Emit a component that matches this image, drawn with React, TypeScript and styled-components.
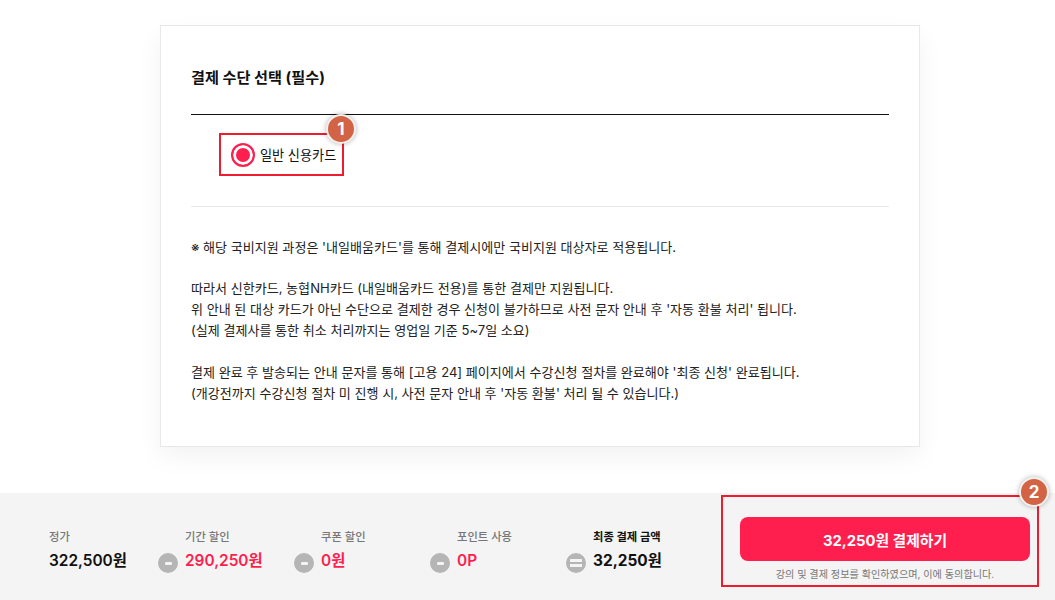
import React from 'react';
import styled, { createGlobalStyle } from 'styled-components';

const GlobalStyle = createGlobalStyle`
  html, body {
    margin: 0;
    padding: 0;
    background: #fff;
    font-family: Inter, "Noto Sans CJK KR", sans-serif;
    color: #111;
  }
  * { box-sizing: border-box; }
`;

const NOTICE = [
  ["※ 해당 국비지원 과정은 '내일배움카드'를 통해 결제시에만 국비지원 대상자로 적용됩니다."],
  [
    '따라서 신한카드, 농협NH카드 (내일배움카드 전용)를 통한 결제만 지원됩니다.',
    "위 안내 된 대상 카드가 아닌 수단으로 결제한 경우 신청이 불가하므로 사전 문자 안내 후 '자동 환불 처리' 됩니다.",
    '(실제 결제사를 통한 취소 처리까지는 영업일 기준 5~7일 소요)',
  ],
  [
    "결제 완료 후 발송되는 안내 문자를 통해 [고용 24] 페이지에서 수강신청 절차를 완료해야 '최종 신청' 완료됩니다.",
    "(개강전까지 수강신청 절차 미 진행 시, 사전 문자 안내 후 '자동 환불' 처리 될 수 있습니다.)",
  ],
];

const PRICES = [
  { label: '기간 할인', value: '290,250원' },
  { label: '쿠폰 할인', value: '0원' },
  { label: '포인트 사용', value: '0P' },
];

function App() {
  return (
    <Page>
      <GlobalStyle />
      <Card>
        <Title>결제 수단 선택 (필수)</Title>
        <MethodArea>
          <MethodBox>
            <Radio />
            <MethodLabel>일반 신용카드</MethodLabel>
            <Marker $top={-21} $right={-14}>1</Marker>
          </MethodBox>
        </MethodArea>
        <Notice>
          {NOTICE.map((group) => (
            <NoticeGroup key={group[0]}>
              {group.map((line) => (
                <NoticeLine key={line}>{line}</NoticeLine>
              ))}
            </NoticeGroup>
          ))}
        </Notice>
      </Card>
      <BottomBar>
        <PriceList>
          <PriceItem>
            <PriceLabel>정가</PriceLabel>
            <PriceValue>322,500원</PriceValue>
          </PriceItem>
          {PRICES.map((price) => (
            <PriceItem key={price.label}>
              <Operator>
                <Minus />
              </Operator>
              <PriceLabel>{price.label}</PriceLabel>
              <PriceValue $red>{price.value}</PriceValue>
            </PriceItem>
          ))}
          <PriceItem>
            <Operator>
              <Equals />
            </Operator>
            <PriceLabel $strong>최종 결제 금액</PriceLabel>
            <PriceValue $bold>32,250원</PriceValue>
          </PriceItem>
        </PriceList>
        <PayBox>
          <PayButton>32,250원 결제하기</PayButton>
          <Agree>강의 및 결제 정보를 확인하였으며, 이에 동의합니다.</Agree>
          <Marker $top={-20} $right={-12}>2</Marker>
        </PayBox>
      </BottomBar>
    </Page>
  );
}

export default App;

const Page = styled.div`
  display: flex;
  flex-direction: column;
  height: 600px;
  overflow: hidden;
  padding-top: 25px;
`;

const Card = styled.section`
  width: 760px;
  height: 422px;
  margin-left: 160px;
  padding: 0 30px;
  background: #fff;
  border: 1px solid #e8e8e8;
  box-shadow: 0 10px 24px rgba(0, 0, 0, 0.05);
`;

const Title = styled.h2`
  margin: 0;
  height: 89px;
  padding-top: 41px;
  font-size: 15.2px;
  line-height: 22px;
  font-weight: 700;
  border-bottom: 1px solid #111;
`;

const MethodArea = styled.div`
  height: 92px;
  padding: 18px 0 0 28px;
  border-bottom: 1px solid #e8e8e8;
`;

const MethodBox = styled.div`
  position: relative;
  display: inline-flex;
  align-items: center;
  gap: 5px;
  width: 125px;
  height: 43px;
  padding-left: 10px;
  border: 2px solid #ed1c2e;
`;

const Radio = styled.span`
  width: 24px;
  height: 24px;
  border-radius: 50%;
  background: #ff1f4f;
  border: 2.5px solid #ff1f4f;
  box-shadow: inset 0 0 0 3px #fff;
`;

const MethodLabel = styled.span`
  font-size: 13.15px;
  white-space: nowrap;
`;

const Marker = styled.span<{ $top: number; $right: number }>`
  position: absolute;
  top: ${(p) => p.$top}px;
  right: ${(p) => p.$right}px;
  width: 30px;
  height: 30px;
  display: flex;
  align-items: center;
  justify-content: center;
  border-radius: 50%;
  border: 2px solid #f4f0ee;
  background: #d26344;
  color: #fff;
  font-size: 17px;
  font-weight: 700;
  box-shadow: 0 0 5px rgba(0, 0, 0, 0.3);
`;

const Notice = styled.div`
  display: flex;
  flex-direction: column;
  gap: 20.5px;
  padding-top: 29.6px;
`;

const NoticeGroup = styled.div``;

const NoticeLine = styled.p`
  margin: 0;
  font-size: 13.05px;
  line-height: 21px;
  color: #222;
  white-space: nowrap;
`;

const BottomBar = styled.footer`
  display: flex;
  justify-content: space-between;
  height: 107px;
  margin-top: 46px;
  padding: 2px 16px 0 49px;
  background: #f4f4f4;
`;

const PriceList = styled.div`
  display: flex;
  gap: 27px;
  padding-top: 34px;
`;

const PriceItem = styled.div`
  position: relative;
  width: 109px;
`;

const PriceLabel = styled.div<{ $strong?: boolean }>`
  font-size: 11.3px;
  line-height: 16px;
  font-weight: ${(p) => (p.$strong ? 700 : 500)};
  color: ${(p) => (p.$strong ? '#111' : '#777')};
  white-space: nowrap;
`;

const PriceValue = styled.div<{ $red?: boolean; $bold?: boolean }>`
  margin-top: 5px;
  font-size: 15.4px;
  line-height: 22px;
  font-weight: ${(p) => (p.$bold ? 700 : 600)};
  color: ${(p) => (p.$red ? '#ff1f4f' : '#111')};
  white-space: nowrap;
`;

const Operator = styled.span`
  position: absolute;
  left: -27px;
  top: 24px;
  width: 20px;
  height: 20px;
  display: flex;
  flex-direction: column;
  align-items: center;
  justify-content: center;
  border-radius: 50%;
  background: #b5b5b5;
`;

const Minus = styled.i`
  display: block;
  width: 7px;
  height: 3px;
  border-radius: 1px;
  background: #f4f4f4;
`;

const Equals = styled.i`
  display: block;
  width: 12px;
  height: 8px;
  border-top: 3px solid #f4f4f4;
  border-bottom: 3px solid #f4f4f4;
`;

const PayBox = styled.div`
  position: relative;
  display: flex;
  flex-direction: column;
  align-items: center;
  width: 318px;
  height: 92px;
  padding: 20px 0 0 10px;
  border: 2px solid #ed1c2e;
`;

const PayButton = styled.button`
  width: 290px;
  height: 44px;
  border: 0;
  border-radius: 8px;
  background: #ff1f4f;
  color: #fff;
  font-family: inherit;
  font-size: 14.8px;
  font-weight: 700;
`;

const Agree = styled.p`
  margin: 6px 0 0;
  font-size: 10.15px;
  line-height: 15px;
  color: #777;
  white-space: nowrap;
`;
